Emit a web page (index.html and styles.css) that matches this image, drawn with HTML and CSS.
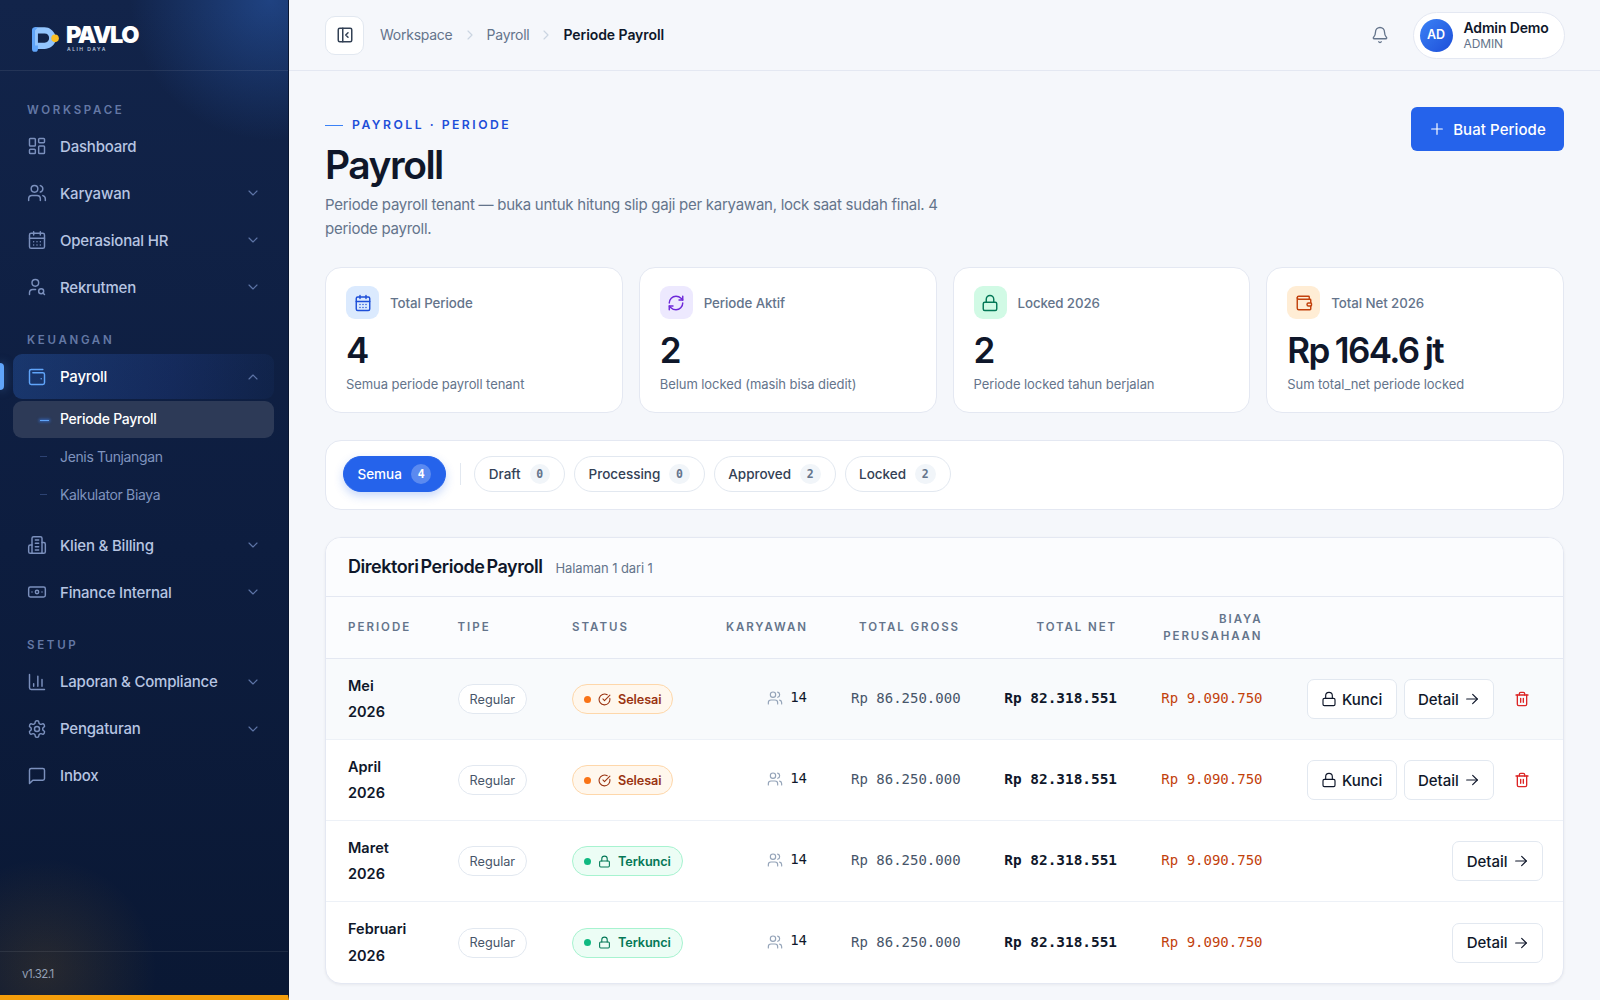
FILE: index.html
```
<!DOCTYPE html>
<html lang="id">
<head>
    <meta charset="UTF-8">
    <meta name="viewport" content="width=device-width, initial-scale=1.0">
    <title>Periode Payroll - Pavlo</title>
    <link rel="stylesheet" href="styles.css">
</head>
<body>
<svg class="sprite" xmlns="http://www.w3.org/2000/svg">
    <symbol id="i-dashboard" viewBox="0 0 24 24"><rect x="3" y="3" width="7" height="9" rx="1"/><rect x="14" y="3" width="7" height="5" rx="1"/><rect x="14" y="12" width="7" height="9" rx="1"/><rect x="3" y="16" width="7" height="5" rx="1"/></symbol>
    <symbol id="i-users" viewBox="0 0 24 24"><path d="M16 21v-2a4 4 0 0 0-4-4H6a4 4 0 0 0-4 4v2"/><circle cx="9" cy="7" r="4"/><path d="M22 21v-2a4 4 0 0 0-3-3.87"/><path d="M16 3.13a4 4 0 0 1 0 7.75"/></symbol>
    <symbol id="i-calendar" viewBox="0 0 24 24"><path d="M8 2v4M16 2v4M3 10h18"/><rect x="3" y="4" width="18" height="18" rx="2"/><path d="M8 14h.01M12 14h.01M16 14h.01M8 18h.01M12 18h.01M16 18h.01"/></symbol>
    <symbol id="i-user-search" viewBox="0 0 24 24"><circle cx="10" cy="7" r="4"/><path d="M10.3 15H7a4 4 0 0 0-4 4v2"/><circle cx="17" cy="17" r="3"/><path d="m21 21-1.9-1.9"/></symbol>
    <symbol id="i-wallet-min" viewBox="0 0 24 24"><path d="M17 14h.01"/><path d="M7 7h12a2 2 0 0 1 2 2v10a2 2 0 0 1-2 2H5a2 2 0 0 1-2-2V5a2 2 0 0 1 2-2h14"/></symbol>
    <symbol id="i-wallet" viewBox="0 0 24 24"><path d="M19 7V4a1 1 0 0 0-1-1H5a2 2 0 0 0 0 4h15a1 1 0 0 1 1 1v4h-3a2 2 0 0 0 0 4h3a1 1 0 0 0 1-1v-2a1 1 0 0 0-1-1"/><path d="M3 5v14a2 2 0 0 0 2 2h15a1 1 0 0 0 1-1v-4"/></symbol>
    <symbol id="i-building" viewBox="0 0 24 24"><path d="M6 22V4a2 2 0 0 1 2-2h8a2 2 0 0 1 2 2v18Z"/><path d="M6 12H4a2 2 0 0 0-2 2v6a2 2 0 0 0 2 2h2"/><path d="M18 9h2a2 2 0 0 1 2 2v9a2 2 0 0 1-2 2h-2"/><path d="M10 6h4M10 10h4M10 14h4M10 18h4"/></symbol>
    <symbol id="i-banknote" viewBox="0 0 24 24"><rect x="2" y="6" width="20" height="12" rx="2"/><circle cx="12" cy="12" r="2"/><path d="M6 12h.01M18 12h.01"/></symbol>
    <symbol id="i-chart" viewBox="0 0 24 24"><path d="M3 3v16a2 2 0 0 0 2 2h16"/><path d="M18 17V9M13 17V5M8 17v-3"/></symbol>
    <symbol id="i-settings" viewBox="0 0 24 24"><path d="M12.22 2h-.44a2 2 0 0 0-2 2v.18a2 2 0 0 1-1 1.73l-.43.25a2 2 0 0 1-2 0l-.15-.08a2 2 0 0 0-2.73.73l-.22.38a2 2 0 0 0 .73 2.73l.15.1a2 2 0 0 1 1 1.72v.51a2 2 0 0 1-1 1.74l-.15.09a2 2 0 0 0-.73 2.73l.22.38a2 2 0 0 0 2.73.73l.15-.08a2 2 0 0 1 2 0l.43.25a2 2 0 0 1 1 1.73V20a2 2 0 0 0 2 2h.44a2 2 0 0 0 2-2v-.18a2 2 0 0 1 1-1.73l.43-.25a2 2 0 0 1 2 0l.15.08a2 2 0 0 0 2.73-.73l.22-.39a2 2 0 0 0-.73-2.73l-.15-.08a2 2 0 0 1-1-1.74v-.5a2 2 0 0 1 1-1.74l.15-.09a2 2 0 0 0 .73-2.73l-.22-.38a2 2 0 0 0-2.73-.73l-.15.08a2 2 0 0 1-2 0l-.43-.25a2 2 0 0 1-1-1.73V4a2 2 0 0 0-2-2z"/><circle cx="12" cy="12" r="3"/></symbol>
    <symbol id="i-message" viewBox="0 0 24 24"><path d="M21 15a2 2 0 0 1-2 2H7l-4 4V5a2 2 0 0 1 2-2h14a2 2 0 0 1 2 2z"/></symbol>
    <symbol id="i-down" viewBox="0 0 24 24"><path d="m6 9 6 6 6-6"/></symbol>
    <symbol id="i-up" viewBox="0 0 24 24"><path d="m18 15-6-6-6 6"/></symbol>
    <symbol id="i-right" viewBox="0 0 24 24"><path d="m9 18 6-6-6-6"/></symbol>
    <symbol id="i-panel" viewBox="0 0 24 24"><rect x="3" y="3" width="18" height="18" rx="2"/><path d="M9 3v18"/><path d="m16 15-3-3 3-3"/></symbol>
    <symbol id="i-bell" viewBox="0 0 24 24"><path d="M10.268 21a2 2 0 0 0 3.464 0"/><path d="M3.262 15.326A1 1 0 0 0 4 17h16a1 1 0 0 0 .74-1.673C19.41 13.956 18 12.499 18 8A6 6 0 0 0 6 8c0 4.499-1.411 5.956-2.738 7.326"/></symbol>
    <symbol id="i-plus" viewBox="0 0 24 24"><path d="M4 12h16M12 4v16"/></symbol>
    <symbol id="i-refresh" viewBox="0 0 24 24"><path d="M3 12a9 9 0 0 1 9-9 9.75 9.75 0 0 1 6.74 2.74L21 8"/><path d="M21 3v5h-5"/><path d="M21 12a9 9 0 0 1-9 9 9.75 9.75 0 0 1-6.74-2.74L3 16"/><path d="M8 16H3v5"/></symbol>
    <symbol id="i-lock" viewBox="0 0 24 24"><rect x="3" y="11" width="18" height="11" rx="2"/><path d="M7 11V7a5 5 0 0 1 10 0v4"/></symbol>
    <symbol id="i-check" viewBox="0 0 24 24"><path d="M21.801 10A10 10 0 1 1 17 3.335"/><path d="m9 11 3 3L22 4"/></symbol>
    <symbol id="i-trash" viewBox="0 0 24 24"><path d="M3 6h18"/><path d="M19 6v14a2 2 0 0 1-2 2H7a2 2 0 0 1-2-2V6"/><path d="M8 6V4a2 2 0 0 1 2-2h4a2 2 0 0 1 2 2v2"/><path d="M10 11v6M14 11v6"/></symbol>
    <symbol id="i-arrow" viewBox="0 0 24 24"><path d="M4 12h16"/><path d="m13 5 7 7-7 7"/></symbol>
</svg>

<div class="layout">
    <aside class="sidebar">
        <div class="brand">
            <svg class="brand-mark" viewBox="0 0 82 75">
                <path fill="#93c5fd" fill-rule="evenodd" d="M8 0H38C54 0 64 10 70 22V46C64 58 54 66 38 66H8ZM18 19V47H38C47 47 52 41 52 33S47 19 38 19Z"/>
                <path fill="#60a5fa" d="M9 0A9 9 0 0 0 0 9V66A9 9 0 0 0 18 66V56H9V10L18 0Z"/>
                <circle cx="70" cy="34" r="11.5" fill="#fbbf24"/>
            </svg>
            <div class="brand-text">
                <span class="brand-name">PAVLO</span>
                <span class="brand-tag">ALIH DAYA</span>
            </div>
        </div>

        <nav class="nav">
            <div class="nav-label">WORKSPACE</div>
            <a class="nav-item"><svg class="icon"><use href="#i-dashboard"/></svg><span>Dashboard</span></a>
            <a class="nav-item"><svg class="icon"><use href="#i-users"/></svg><span>Karyawan</span><svg class="caret"><use href="#i-down"/></svg></a>
            <a class="nav-item"><svg class="icon"><use href="#i-calendar"/></svg><span>Operasional HR</span><svg class="caret"><use href="#i-down"/></svg></a>
            <a class="nav-item"><svg class="icon"><use href="#i-user-search"/></svg><span>Rekrutmen</span><svg class="caret"><use href="#i-down"/></svg></a>

            <div class="nav-label">KEUANGAN</div>
            <a class="nav-item active"><svg class="icon"><use href="#i-wallet-min"/></svg><span>Payroll</span><svg class="caret"><use href="#i-up"/></svg></a>
            <div class="subnav">
                <a class="sub-item current">Periode Payroll</a>
                <a class="sub-item">Jenis Tunjangan</a>
                <a class="sub-item">Kalkulator Biaya</a>
            </div>
            <a class="nav-item"><svg class="icon"><use href="#i-building"/></svg><span>Klien &amp; Billing</span><svg class="caret"><use href="#i-down"/></svg></a>
            <a class="nav-item"><svg class="icon"><use href="#i-banknote"/></svg><span>Finance Internal</span><svg class="caret"><use href="#i-down"/></svg></a>

            <div class="nav-label">SETUP</div>
            <a class="nav-item"><svg class="icon"><use href="#i-chart"/></svg><span>Laporan &amp; Compliance</span><svg class="caret"><use href="#i-down"/></svg></a>
            <a class="nav-item"><svg class="icon"><use href="#i-settings"/></svg><span>Pengaturan</span><svg class="caret"><use href="#i-down"/></svg></a>
            <a class="nav-item"><svg class="icon"><use href="#i-message"/></svg><span>Inbox</span></a>
        </nav>

        <div class="version">v1.32.1</div>
    </aside>

    <div class="page">
        <header class="topbar">
            <button class="toggle"><svg><use href="#i-panel"/></svg></button>
            <div class="crumbs">
                <span>Workspace</span>
                <svg><use href="#i-right"/></svg>
                <span>Payroll</span>
                <svg><use href="#i-right"/></svg>
                <strong>Periode Payroll</strong>
            </div>
            <svg class="bell"><use href="#i-bell"/></svg>
            <div class="user">
                <div class="avatar">AD</div>
                <div class="user-info">
                    <span class="user-name">Admin Demo</span>
                    <span class="user-role">ADMIN</span>
                </div>
            </div>
        </header>

        <main class="content">
            <div class="page-head">
                <div>
                    <div class="eyebrow">PAYROLL · PERIODE</div>
                    <h1>Payroll</h1>
                    <p>Periode payroll tenant — buka untuk hitung slip gaji per karyawan, lock saat sudah final. 4<br>periode payroll.</p>
                </div>
                <button class="btn-primary"><svg><use href="#i-plus"/></svg>Buat Periode</button>
            </div>

            <div class="stats">
                <div class="stat">
                    <div class="stat-head"><span class="stat-icon blue"><svg><use href="#i-calendar"/></svg></span>Total Periode</div>
                    <div class="stat-value">4</div>
                    <div class="stat-note">Semua periode payroll tenant</div>
                </div>
                <div class="stat">
                    <div class="stat-head"><span class="stat-icon violet"><svg><use href="#i-refresh"/></svg></span>Periode Aktif</div>
                    <div class="stat-value">2</div>
                    <div class="stat-note">Belum locked (masih bisa diedit)</div>
                </div>
                <div class="stat">
                    <div class="stat-head"><span class="stat-icon green"><svg><use href="#i-lock"/></svg></span>Locked 2026</div>
                    <div class="stat-value">2</div>
                    <div class="stat-note">Periode locked tahun berjalan</div>
                </div>
                <div class="stat">
                    <div class="stat-head"><span class="stat-icon orange"><svg><use href="#i-wallet"/></svg></span>Total Net 2026</div>
                    <div class="stat-value money">Rp 164.6 jt</div>
                    <div class="stat-note">Sum total_net periode locked</div>
                </div>
            </div>

            <div class="filters">
                <button class="chip on">Semua<span class="count">4</span></button>
                <span class="divider"></span>
                <button class="chip">Draft<span class="count">0</span></button>
                <button class="chip">Processing<span class="count">0</span></button>
                <button class="chip">Approved<span class="count">2</span></button>
                <button class="chip">Locked<span class="count">2</span></button>
            </div>

            <section class="panel">
                <div class="panel-head">
                    <h2>Direktori Periode Payroll</h2>
                    <span>Halaman 1 dari 1</span>
                </div>
                <table>
                    <colgroup>
                        <col class="c-periode"><col class="c-tipe"><col class="c-status"><col class="c-karyawan"><col class="c-gross"><col class="c-net"><col class="c-biaya"><col>
                    </colgroup>
                    <thead>
                        <tr>
                            <th>PERIODE</th>
                            <th>TIPE</th>
                            <th>STATUS</th>
                            <th class="num">KARYAWAN</th>
                            <th class="num">TOTAL GROSS</th>
                            <th class="num">TOTAL NET</th>
                            <th class="num">BIAYA PERUSAHAAN</th>
                            <th></th>
                        </tr>
                    </thead>
                    <tbody>
                        <tr class="hover">
                            <td class="periode">Mei<br>2026</td>
                            <td><span class="tag">Regular</span></td>
                            <td><span class="status done"><i></i><svg><use href="#i-check"/></svg>Selesai</span></td>
                            <td class="num"><span class="people"><svg><use href="#i-users"/></svg>14</span></td>
                            <td class="num gross">Rp 86.250.000</td>
                            <td class="num net">Rp 82.318.551</td>
                            <td class="num biaya">Rp 9.090.750</td>
                            <td><div class="actions">
                                <button class="btn"><svg><use href="#i-lock"/></svg>Kunci</button>
                                <button class="btn">Detail<svg class="arrow"><use href="#i-arrow"/></svg></button>
                                <button class="btn-del"><svg><use href="#i-trash"/></svg></button>
                            </div></td>
                        </tr>
                        <tr>
                            <td class="periode">April<br>2026</td>
                            <td><span class="tag">Regular</span></td>
                            <td><span class="status done"><i></i><svg><use href="#i-check"/></svg>Selesai</span></td>
                            <td class="num"><span class="people"><svg><use href="#i-users"/></svg>14</span></td>
                            <td class="num gross">Rp 86.250.000</td>
                            <td class="num net">Rp 82.318.551</td>
                            <td class="num biaya">Rp 9.090.750</td>
                            <td><div class="actions">
                                <button class="btn"><svg><use href="#i-lock"/></svg>Kunci</button>
                                <button class="btn">Detail<svg class="arrow"><use href="#i-arrow"/></svg></button>
                                <button class="btn-del"><svg><use href="#i-trash"/></svg></button>
                            </div></td>
                        </tr>
                        <tr>
                            <td class="periode">Maret<br>2026</td>
                            <td><span class="tag">Regular</span></td>
                            <td><span class="status locked"><i></i><svg><use href="#i-lock"/></svg>Terkunci</span></td>
                            <td class="num"><span class="people"><svg><use href="#i-users"/></svg>14</span></td>
                            <td class="num gross">Rp 86.250.000</td>
                            <td class="num net">Rp 82.318.551</td>
                            <td class="num biaya">Rp 9.090.750</td>
                            <td><div class="actions">
                                <button class="btn">Detail<svg class="arrow"><use href="#i-arrow"/></svg></button>
                            </div></td>
                        </tr>
                        <tr>
                            <td class="periode">Februari<br>2026</td>
                            <td><span class="tag">Regular</span></td>
                            <td><span class="status locked"><i></i><svg><use href="#i-lock"/></svg>Terkunci</span></td>
                            <td class="num"><span class="people"><svg><use href="#i-users"/></svg>14</span></td>
                            <td class="num gross">Rp 86.250.000</td>
                            <td class="num net">Rp 82.318.551</td>
                            <td class="num biaya">Rp 9.090.750</td>
                            <td><div class="actions">
                                <button class="btn">Detail<svg class="arrow"><use href="#i-arrow"/></svg></button>
                            </div></td>
                        </tr>
                    </tbody>
                </table>
            </section>
        </main>
    </div>
</div>
</body>
</html>
```
FILE: styles.css
```
* {
    margin: 0;
    padding: 0;
    box-sizing: border-box;
}

body {
    font-family: Inter, "Liberation Sans", sans-serif;
    background-color: #f5f7fb;
    color: #0f172a;
    height: 100vh;
    overflow: hidden;
}

button {
    font: inherit;
    border: none;
    background: none;
}

svg {
    fill: none;
    stroke: currentColor;
    stroke-width: 1.75;
    stroke-linecap: round;
    stroke-linejoin: round;
    flex-shrink: 0;
}

.sprite {
    display: none;
}

.layout {
    display: flex;
    height: 100vh;
}

/* sidebar */

.sidebar {
    width: 289px;
    flex-shrink: 0;
    display: flex;
    flex-direction: column;
    border-right: 1px solid #0a1630;
    border-bottom: 5px solid #f59e0b;
    background:
        radial-gradient(circle at 270px 0, rgba(59, 130, 246, 0.32), transparent 140px),
        radial-gradient(circle at 45px 970px, rgba(245, 158, 11, 0.12), transparent 112px),
        linear-gradient(180deg, #12244a 0%, #0d1d3f 55%, #0a1834 100%);
}

.brand {
    height: 71px;
    padding: 6px 0 0 32px;
    display: flex;
    align-items: center;
    gap: 8px;
    border-bottom: 1px solid rgba(255, 255, 255, 0.08);
}

.brand-mark {
    width: 27px;
    height: 25px;
    stroke: none;
    margin-top: 2px;
}

.brand-text {
    display: flex;
    flex-direction: column;
    margin-left: -1px;
}

.brand-name {
    color: #fff;
    font-size: 23.5px;
    font-weight: 900;
    line-height: 20px;
    letter-spacing: -1.5px;
}

.brand-tag {
    color: #b4c0d8;
    font-size: 5px;
    font-weight: 600;
    line-height: 6px;
    letter-spacing: 1.5px;
    margin-top: 1px;
    padding-left: 1px;
}

.nav {
    flex: 1;
    padding: 27.5px 14px 0 13px;
}

.nav-label {
    height: 25px;
    padding-left: 14px;
    font-size: 11.5px;
    font-weight: 600;
    line-height: 22px;
    letter-spacing: 2.7px;
    color: #6478a5;
}

.nav-item + .nav-label {
    margin-top: 19.5px;
}

.nav-item {
    position: relative;
    display: flex;
    align-items: center;
    height: 45px;
    margin-bottom: 2.1px;
    padding: 0 13px 0 14px;
    border-radius: 9px;
    font-size: 15px;
    font-weight: 500;
    letter-spacing: -0.2px;
    color: #b7c5e2;
}

.nav-item .icon {
    width: 20px;
    height: 20px;
    margin-right: 13px;
    color: #7b90bd;
}

.nav-item .caret {
    width: 16px;
    height: 16px;
    margin-left: auto;
    color: #5d74a6;
}

.nav-item.active {
    color: #fff;
    background: linear-gradient(100deg, rgba(59, 130, 246, 0.24), rgba(59, 110, 246, 0.14) 60%, rgba(59, 130, 246, 0.04));
}

.nav-item.active .icon {
    color: #60a5fa;
}

.nav-item.active::before {
    content: "";
    position: absolute;
    left: -13px;
    top: 9px;
    width: 4px;
    height: 27px;
    border-radius: 0 4px 4px 0;
    background-color: #60a5fa;
    box-shadow: 0 0 10px rgba(96, 165, 250, 0.5);
}

.subnav {
    margin-bottom: 9px;
}

.sub-item {
    display: flex;
    align-items: center;
    height: 37px;
    margin-bottom: 0.6px;
    padding: 0 0 2px 27px;
    border-radius: 9px;
    font-size: 14px;
    letter-spacing: -0.35px;
    color: #7f93be;
}

.sub-item::before {
    content: "";
    width: 7px;
    height: 1px;
    margin-right: 13px;
    background-color: #2c4272;
}

.sub-item.current {
    color: #fff;
    font-weight: 500;
    letter-spacing: -0.27px;
    background-color: #2d3a57;
}

.sub-item.current::before {
    width: 9px;
    margin-right: 11px;
    margin-top: 3px;
    background-color: #60a5fa;
    box-shadow: 0 0 3px 1px rgba(59, 130, 246, 0.6);
}

.version {
    height: 44px;
    padding-left: 22px;
    border-top: 1px solid rgba(255, 255, 255, 0.08);
    font-size: 11.5px;
    line-height: 44px;
    letter-spacing: -0.5px;
    color: #94a0b5;
}

/* top bar */

.page {
    flex: 1;
}

.topbar {
    height: 71px;
    padding: 0 35.5px 0 36px;
    display: flex;
    align-items: center;
    border-bottom: 1px solid #e4e8f2;
}

.toggle {
    width: 39px;
    height: 39px;
    display: flex;
    align-items: center;
    justify-content: center;
    border: 1px solid #e2e8f0;
    border-radius: 10px;
    background-color: #fff;
    color: #334155;
}

.toggle svg {
    width: 18px;
    height: 18px;
    stroke-width: 2;
}

.crumbs {
    display: flex;
    align-items: center;
    margin-left: 16px;
    padding-bottom: 2px;
    font-size: 14px;
    letter-spacing: -0.25px;
    color: #64748b;
}

.crumbs svg {
    width: 16px;
    height: 16px;
    margin: 2px 9px 0;
    color: #cbd5e1;
}

.crumbs strong {
    color: #0f172a;
    font-weight: 600;
    letter-spacing: -0.07px;
}

.bell {
    width: 18px;
    height: 18px;
    margin-left: auto;
    margin-right: 24px;
    color: #64748b;
}

.user {
    display: flex;
    align-items: center;
    width: 152px;
    height: 47px;
    padding-left: 6px;
    border: 1px solid #e4e8f2;
    border-radius: 24px;
    background-color: #fff;
}

.avatar {
    width: 33px;
    height: 33px;
    border-radius: 50%;
    background: linear-gradient(135deg, #3b82f6, #1d4ed8);
    color: #fff;
    font-size: 12.5px;
    font-weight: 600;
    line-height: 32px;
    text-align: center;
}

.user-info {
    display: flex;
    flex-direction: column;
    margin-left: 11px;
}

.user-name {
    font-size: 14px;
    font-weight: 600;
    line-height: 17px;
    letter-spacing: -0.15px;
    white-space: nowrap;
}

.user-role {
    font-size: 12px;
    line-height: 16px;
    letter-spacing: -0.1px;
    color: #64748b;
}

/* content */

.content {
    padding: 36px;
}

.page-head {
    display: flex;
    justify-content: space-between;
    align-items: flex-start;
}

.eyebrow {
    display: flex;
    align-items: center;
    gap: 9px;
    margin-top: 9px;
    font-size: 12.2px;
    font-weight: 600;
    line-height: 18px;
    letter-spacing: 2.5px;
    color: #1d4ed8;
}

.eyebrow::before {
    content: "";
    width: 18px;
    height: 1px;
    background-color: #3b82f6;
}

h1 {
    font-size: 39px;
    font-weight: 600;
    line-height: 44px;
    letter-spacing: -1.5px;
    margin-top: 9px;
}

.page-head p {
    margin-top: 6px;
    font-size: 15px;
    line-height: 23.5px;
    letter-spacing: -0.26px;
    color: #64748b;
    white-space: nowrap;
}

.btn-primary {
    display: flex;
    align-items: center;
    justify-content: center;
    gap: 8px;
    width: 153px;
    height: 44px;
    border-radius: 6px;
    background-color: #2563eb;
    color: #fff;
    font-size: 15px;
    font-weight: 500;
    letter-spacing: 0.08px;
}

.btn-primary svg {
    width: 16px;
    height: 16px;
}

.stats {
    display: grid;
    grid-template-columns: repeat(4, 1fr);
    gap: 16px;
    margin-top: 27px;
}

.stat {
    height: 146px;
    padding: 18px 20px;
    border: 1px solid #e4e8f2;
    border-radius: 16px;
    background-color: #fff;
}

.stat-head {
    display: flex;
    align-items: center;
    gap: 11px;
    font-size: 13.3px;
    font-weight: 500;
    letter-spacing: -0.08px;
    color: #64748b;
}

.stat-icon {
    width: 33px;
    height: 33px;
    display: flex;
    align-items: center;
    justify-content: center;
    border-radius: 9px;
}

.stat-icon svg {
    width: 18px;
    height: 18px;
    stroke-width: 1.9;
}

.blue { background-color: #dbeafe; color: #1d4ed8; }
.violet { background-color: #ede9fe; color: #6d28d9; }
.green { background-color: #d1fae5; color: #047857; }
.orange { background-color: #ffedd5; color: #c2410c; }

.stat-value {
    margin-top: 10px;
    font-size: 35px;
    font-weight: 600;
    line-height: 42px;
    letter-spacing: -1px;
    white-space: nowrap;
}

.stat-value.money {
    letter-spacing: -1.6px;
    word-spacing: -1.2px;
}

.stat-note {
    margin-top: 3px;
    font-size: 13px;
    line-height: 20px;
    letter-spacing: -0.07px;
    color: #64748b;
}

.filters {
    display: flex;
    align-items: center;
    height: 70px;
    margin-top: 27px;
    padding: 0 17px 2px;
    border: 1px solid #e4e8f2;
    border-radius: 16px;
    background-color: #fff;
}

.chip {
    display: flex;
    align-items: center;
    gap: 9px;
    height: 36px;
    margin-right: 9px;
    padding: 0 14px 0 13.5px;
    border: 1px solid #e2e8f0;
    border-radius: 18px;
    font-size: 13.5px;
    font-weight: 500;
    letter-spacing: -0.02px;
    color: #334155;
}

.chip.on {
    border-color: #2563eb;
    background-color: #2563eb;
    color: #fff;
    box-shadow: 0 4px 10px rgba(37, 99, 235, 0.25);
    margin-right: 14px;
}

.count {
    width: 20.5px;
    height: 20px;
    border-radius: 10px;
    background-color: #f1f5f9;
    color: #64748b;
    font-family: "DejaVu Sans Mono", monospace;
    font-size: 11.5px;
    font-weight: 700;
    line-height: 20px;
    text-align: center;
}

.chip.on .count {
    background-color: rgba(255, 255, 255, 0.25);
    color: #fff;
}

.divider {
    width: 1px;
    height: 22px;
    margin-right: 13px;
    background-color: #e2e8f0;
}

/* table */

.panel {
    margin-top: 27px;
    border: 1px solid #e4e8f2;
    border-radius: 16px;
    background-color: #fff;
    overflow: hidden;
    box-shadow: 0 1px 3px rgba(15, 23, 42, 0.06);
}

.panel-head {
    display: flex;
    align-items: baseline;
    gap: 13px;
    height: 59px;
    padding: 17px 22px 0;
    border-bottom: 1px solid #e4e8f2;
    background-color: #fbfcfe;
}

.panel-head h2 {
    font-size: 18px;
    font-weight: 600;
    line-height: 24px;
    letter-spacing: -0.45px;
    word-spacing: -2px;
}

.panel-head span {
    font-size: 13px;
    letter-spacing: -0.1px;
    color: #64748b;
}

table {
    width: 100%;
    table-layout: fixed;
    border-collapse: separate;
    border-spacing: 0;
}

.c-periode { width: 109.5px; }
.c-tipe { width: 114.5px; }
.c-status { width: 154px; }
.c-karyawan { width: 125px; }
.c-gross { width: 153px; }
.c-net { width: 157px; }
.c-biaya { width: 145.5px; }

th {
    height: 62px;
    padding: 0 22px;
    border-bottom: 1px solid #e4e8f2;
    background-color: #fbfcfe;
    font-size: 11.5px;
    font-weight: 600;
    line-height: 16.5px;
    letter-spacing: 2px;
    text-align: left;
    white-space: nowrap;
    color: #64748b;
}

th.num {
    letter-spacing: 1.9px;
}

th:nth-child(7) {
    white-space: normal;
}

td {
    height: 81px;
    padding: 0 22px;
    border-bottom: 1px solid #edf1f7;
    font-size: 14px;
}

tr:last-child td {
    border-bottom: none;
}

.hover td {
    background-color: #f8fafc;
}

.num {
    text-align: right;
}

td.num {
    font-family: "DejaVu Sans Mono", monospace;
    white-space: nowrap;
    padding-bottom: 2px;
}

.periode {
    font-size: 14.5px;
    font-weight: 600;
    line-height: 26.5px;
}

.tag,
.status {
    display: inline-flex;
    align-items: center;
    height: 30px;
    padding: 0 11px;
    border: 1px solid #e2e8f0;
    border-radius: 15px;
    background-color: #fff;
    font-size: 12.7px;
    color: #475569;
    vertical-align: middle;
}

.status {
    gap: 7px;
    font-weight: 600;
    letter-spacing: -0.1px;
}

.status i {
    width: 7px;
    height: 7px;
    border-radius: 50%;
    background-color: currentColor;
}

.status svg {
    width: 13px;
    height: 13px;
    stroke-width: 2;
}

.status.done {
    border-color: #fed7aa;
    background-color: #fff7ed;
    color: #9a3412;
}

.status.done i { background-color: #f97316; }

.status.locked {
    border-color: #a7f3d0;
    background-color: #ecfdf5;
    color: #047857;
}

.status.locked i { background-color: #10b981; }

.people {
    display: inline-flex;
    align-items: center;
    gap: 7px;
    padding-bottom: 3px;
}

.people svg {
    width: 16px;
    height: 16px;
    margin-top: 3px;
    color: #94a3b8;
}

.gross { color: #475569; }
.net { font-weight: 700; }
td.net { font-size: 14.4px; }
.biaya { color: #c2410c; }

th.net,
th.gross,
th.biaya {
    color: #64748b;
}

.actions {
    display: flex;
    justify-content: flex-end;
    gap: 7px;
    margin-right: -2px;
}

.btn {
    display: flex;
    align-items: center;
    gap: 5px;
    height: 40px;
    padding: 0 13.4px;
    border: 1px solid #e2e8f0;
    border-radius: 7px;
    background-color: #fff;
    font-size: 15px;
    font-weight: 500;
    color: #0f172a;
}

.btn svg {
    width: 16px;
    height: 16px;
}

.btn-del {
    width: 42px;
    height: 40px;
    display: flex;
    align-items: center;
    justify-content: center;
    color: #dc2626;
}

.btn-del svg {
    width: 16px;
    height: 16px;
    stroke-width: 2;
}
```
